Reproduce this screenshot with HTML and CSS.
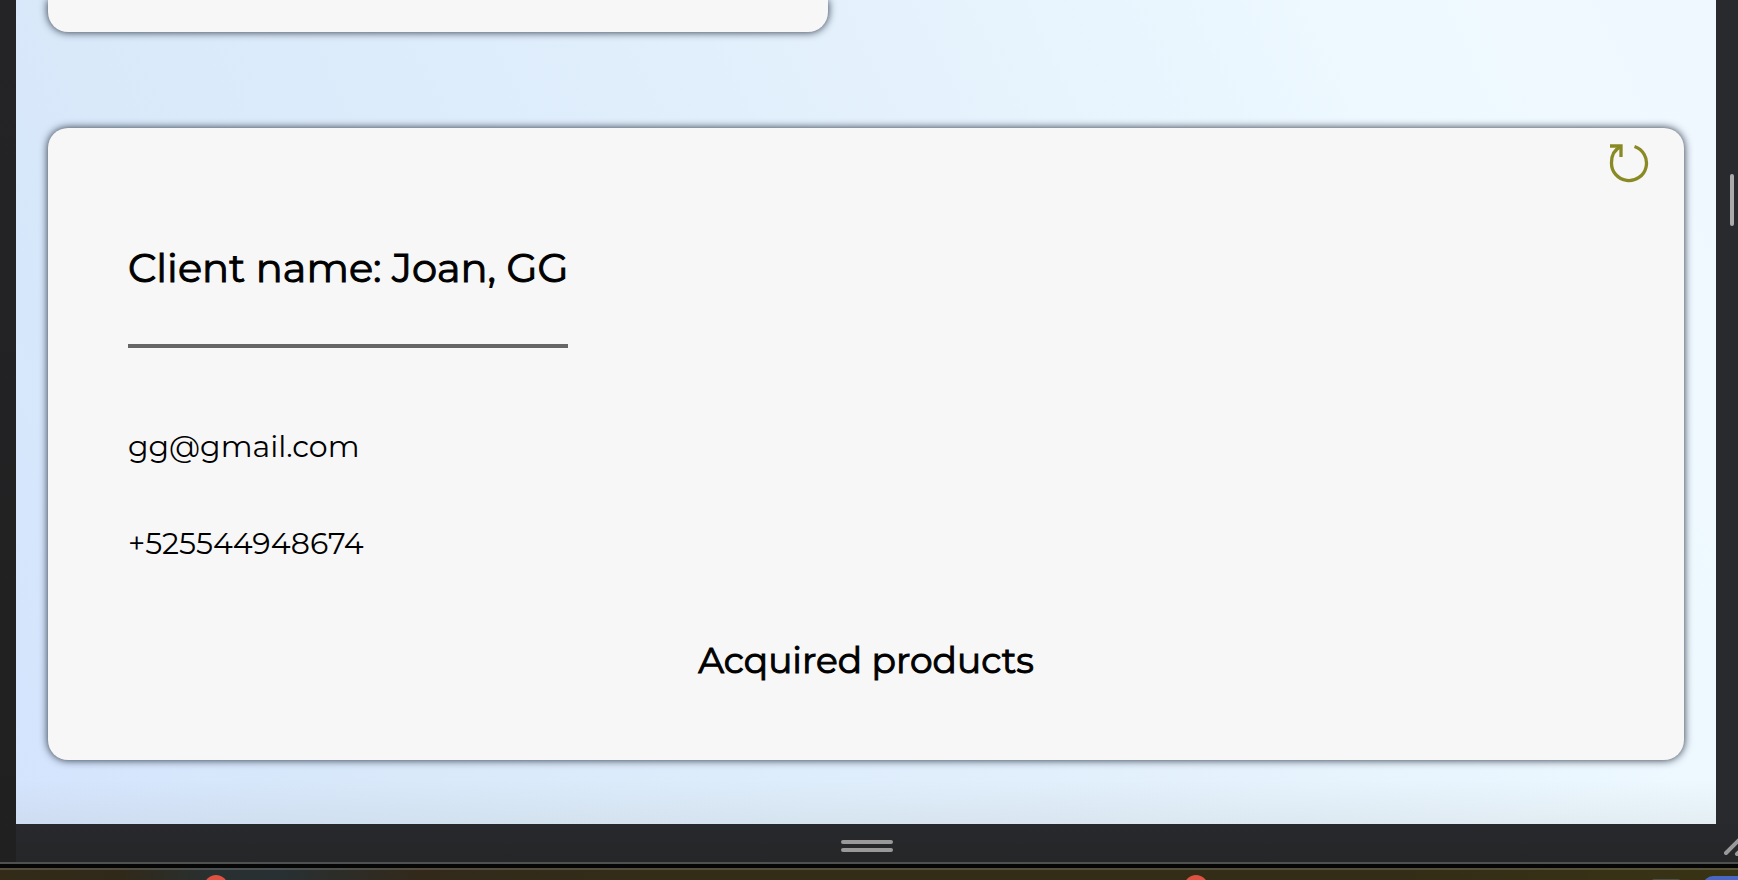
FILE: index.html
```html
<!DOCTYPE html>
<html lang="en">
<head>
<meta charset="utf-8">
<title>Client details</title>
<link rel="stylesheet" href="styles.css">
</head>
<body>
<div class="device">
  <div class="edge edge-left"></div>
  <div class="frame">
    <div class="stage">
      <main class="page">
        <section class="card card-previous"></section>
        <section class="card card-client">
          <button class="refresh" type="button" aria-label="Refresh">
            <svg viewBox="0 0 40 40" width="40" height="40" fill="none" stroke="#8a8a25" stroke-width="3.300">
              <path d="M1 3H12V14"/>
              <path d="M12 3.500C5.500 6.500 2.500 12.500 2.500 19.500A17.500 17.500 0 1 0 25.500 3.500" stroke-linejoin="round"/>
            </svg>
          </button>
          <h1 class="client-name">Client name: Joan, GG</h1>
          <p class="contact">gg@gmail.com</p>
          <p class="contact">+525544948674</p>
          <h2 class="products-title">Acquired products</h2>
        </section>
      </main>
      <div class="side-handle"><span class="grip grip-vertical"></span></div>
    </div>
    <div class="bottom-handle">
      <span class="grip"></span>
      <span class="grip"></span>
      <svg class="corner" viewBox="0 0 16 20" width="16" height="20" stroke="#999" stroke-width="4" stroke-linecap="round"><path d="M4 15L18 1M15 16L20 11"/></svg>
    </div>
  </div>
</div>
<div class="dock">
  <span class="badge badge-first"></span>
  <span class="badge badge-second"></span>
  <span class="dock-gray"></span>
  <span class="dock-app"></span>
</div>
</body>
</html>
```

FILE: styles.css
```css
* {
  box-sizing: border-box;
}

body {
  margin: 0;
  height: 100vh;
  display: flex;
  flex-direction: column;
  overflow: hidden;
  background: #000;
  color: #000;
  font-family: Montserrat, Inter, "Liberation Sans", sans-serif;
}

.device {
  flex: 1;
  min-height: 0;
  display: flex;
  border-bottom: 2px solid #505051;
}

.edge-left {
  width: 16px;
  background: linear-gradient(#242426, #202021);
}

.frame {
  flex: 1;
  display: flex;
  flex-direction: column;
  background: #292a2d;
}

.stage {
  flex: 1;
  min-height: 0;
  display: flex;
}

.page {
  flex: 1;
  display: flex;
  flex-direction: column;
  gap: 96px;
  padding: 0 32px 64px;
  background:
    linear-gradient(to top, rgba(170, 175, 170, 0.14), transparent 44px),
    linear-gradient(65deg, #d4e4fd, #d9e9fa 20%, #e1effc 50%, #eef9ff 84%, #f0f8ff);
}

.card {
  border-radius: 20px;
  background: #f7f7f7;
  box-shadow: 0 0 8px #222c3c;
}

.card-previous {
  width: 780px;
  height: 32px;
  border-top-left-radius: 0;
  border-top-right-radius: 0;
  box-shadow: 0 -8px 0 #f7f7f7, 0 0 8px #222c3c;
}

.card-client {
  position: relative;
  flex: 1;
  display: flex;
  flex-direction: column;
  align-items: flex-start;
  padding: 116px 80px 0;
}

.refresh {
  position: absolute;
  top: 15px;
  right: 35px;
  padding: 0;
  border: 0;
  background: none;
  cursor: pointer;
}

.refresh svg {
  display: block;
}

.client-name,
.products-title {
  font-weight: 400;
  -webkit-text-stroke: 1px #000;
}

.client-name {
  margin: 0 0 79px;
  padding-bottom: 52px;
  border-bottom: 4px solid #666;
  font-size: 40px;
  line-height: 48px;
}

.contact {
  margin: 0 0 57px;
  font-size: 30px;
  line-height: 40px;
}

.products-title {
  margin: 17px 0 0;
  align-self: center;
  font-size: 36px;
  line-height: 44px;
}

.side-handle {
  width: 22px;
  padding: 174px 4px 0 14px;
}

.grip {
  width: 52px;
  height: 4px;
  border-radius: 2px;
  background: #999;
}

.grip-vertical {
  display: block;
  width: 4px;
  height: 52px;
  background: #aaa;
}

.bottom-handle {
  position: relative;
  height: 38px;
  display: flex;
  flex-direction: column;
  align-items: center;
  gap: 4px;
  padding: 16px 20px 0 0;
  background: linear-gradient(#28292c, #252628);
}

.corner {
  position: absolute;
  right: 0;
  bottom: 4px;
}

.dock {
  position: relative;
  height: 16px;
  border-top: 4px solid #060606;
  overflow: hidden;
  background:
    linear-gradient(rgba(255, 255, 255, 0.16) 2px, transparent 2px),
    linear-gradient(90deg, #332b18, #30291a 7%, #293030 12%, #283033 16%, #32291b 24%, #332d17 40%, #332d17 80%, #393315);
}

.badge {
  position: absolute;
  top: 7px;
  width: 24px;
  height: 24px;
  border-radius: 50%;
  background: #df5140;
}

.badge-first {
  left: 204px;
}

.badge-second {
  left: 1184px;
}

.dock-gray {
  position: absolute;
  top: 11px;
  right: 55px;
  width: 34px;
  height: 12px;
  border-radius: 6px;
  background: #4b5348;
}

.dock-app {
  position: absolute;
  top: 8px;
  right: 0;
  width: 35px;
  height: 40px;
  border-top-left-radius: 10px;
  background: #4966c5;
}
```
